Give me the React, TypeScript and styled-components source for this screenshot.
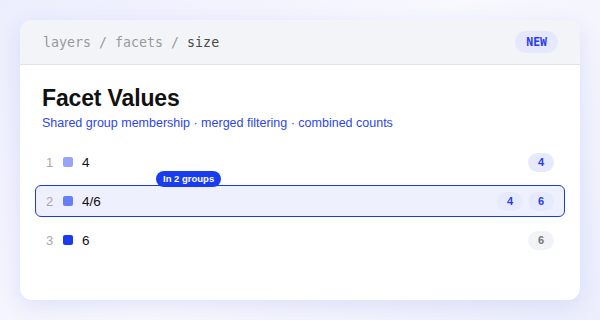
import React from 'react';
import styled, { createGlobalStyle, css } from 'styled-components';

interface Row {
  index: number;
  label: string;
  swatch: string;
  counts: number[];
  selected?: boolean;
  muted?: boolean;
  note?: string;
}

const rows: Row[] = [
  { index: 1, label: '4', swatch: '#94a5fb', counts: [4] },
  { index: 2, label: '4/6', swatch: '#6680fb', counts: [4, 6], selected: true, note: 'In 2 groups' },
  { index: 3, label: '6', swatch: '#1a3cf0', counts: [6], muted: true },
];

const GlobalStyle = createGlobalStyle`
  html, body {
    margin: 0;
    padding: 0;
  }
  body {
    width: 600px;
    height: 320px;
    overflow: hidden;
    background: linear-gradient(135deg, #eceefd 0%, #f8f8fd 50%, #eceefc 100%);
    font-family: "Liberation Sans", Arial, sans-serif;
  }
`;

const App = () => {
  return (
    <Page>
      <GlobalStyle />
      <Card>
        <Header>
          <Crumbs>
            layers / facets / <Current>size</Current>
          </Crumbs>
          <NewBadge>NEW</NewBadge>
        </Header>
        <Body>
          <Title>Facet Values</Title>
          <Subtitle>Shared group membership · merged filtering · combined counts</Subtitle>
          <List>
            {rows.map(row => (
              <Item key={row.index} selected={row.selected}>
                {row.note && <Note>{row.note}</Note>}
                <Index>{row.index}</Index>
                <Swatch color={row.swatch} />
                <Label>{row.label}</Label>
                <Counts>
                  {row.counts.map((c, i) => (
                    <Count key={i} muted={row.muted}>
                      {c}
                    </Count>
                  ))}
                </Counts>
              </Item>
            ))}
          </List>
        </Body>
      </Card>
    </Page>
  );
};

export default App;

const Page = styled.div`
  padding: 20px;
  box-sizing: border-box;
  width: 600px;
  height: 320px;
`;

const Card = styled.div`
  width: 560px;
  height: 280px;
  background: #ffffff;
  border-radius: 12px;
  overflow: hidden;
  box-shadow: 0 6px 22px rgba(60, 80, 220, 0.12);
`;

const Header = styled.div`
  display: flex;
  align-items: center;
  justify-content: space-between;
  height: 44px;
  padding: 0 22px 0 23px;
  background: #f3f4f8;
  border-bottom: 1px solid #e2e3e8;
`;

const Crumbs = styled.div`
  font-family: "DejaVu Sans Mono", "Liberation Mono", monospace;
  font-size: 13.3px;
  color: #999999;
`;

const Current = styled.span`
  color: #4a4a4a;
`;

const NewBadge = styled.span`
  display: inline-flex;
  align-items: center;
  justify-content: center;
  height: 22px;
  padding: 0 11px;
  border-radius: 11px;
  background: #e6e9fd;
  color: #2a3cf0;
  font-family: "DejaVu Sans Mono", "Liberation Mono", monospace;
  font-size: 11.5px;
  font-weight: 700;
`;

const Body = styled.div`
  padding: 18px 15px 0 15px;
`;

const Title = styled.h1`
  margin: 0 0 0 7px;
  font-size: 23px;
  font-weight: 700;
  line-height: 30px;
  letter-spacing: -0.15px;
  color: #111111;
`;

const Subtitle = styled.p`
  margin: 1px 0 0 7px;
  font-size: 12.5px;
  line-height: 18px;
  color: #2d46ec;
`;

const List = styled.div`
  display: flex;
  flex-direction: column;
  gap: 7px;
  margin-top: 14px;
`;

const Item = styled.div<{ selected?: boolean }>`
  position: relative;
  display: flex;
  align-items: center;
  height: 32px;
  box-sizing: border-box;
  padding: 0 10px;
  border: 1px solid transparent;
  border-radius: 6px;
  ${props =>
    props.selected &&
    css`
      border-color: #1a3be8;
      background: #eef0fd;
    `}
`;

const Note = styled.span`
  position: absolute;
  left: 120px;
  top: -15px;
  height: 16px;
  padding: 0 7px;
  border-radius: 8px;
  background: #1a3cf0;
  color: #ffffff;
  font-size: 9.5px;
  font-weight: 700;
  line-height: 16px;
  white-space: nowrap;
`;

const Index = styled.span`
  width: 17px;
  font-size: 13px;
  color: #a8a8a8;
`;

const Swatch = styled.span<{ color: string }>`
  width: 10px;
  height: 10px;
  border-radius: 2px;
  background: ${props => props.color};
`;

const Label = styled.span`
  margin-left: 9px;
  font-size: 13.5px;
  color: #111111;
`;

const Counts = styled.div`
  display: flex;
  gap: 5px;
  margin-left: auto;
`;

const Count = styled.span<{ muted?: boolean }>`
  display: inline-flex;
  align-items: center;
  justify-content: center;
  min-width: 26px;
  height: 19px;
  border-radius: 10px;
  font-size: 11px;
  font-weight: 700;
  background: ${props => (props.muted ? '#f2f3f6' : '#e7eafd')};
  color: ${props => (props.muted ? '#777777' : '#2a3cf0')};
`;
